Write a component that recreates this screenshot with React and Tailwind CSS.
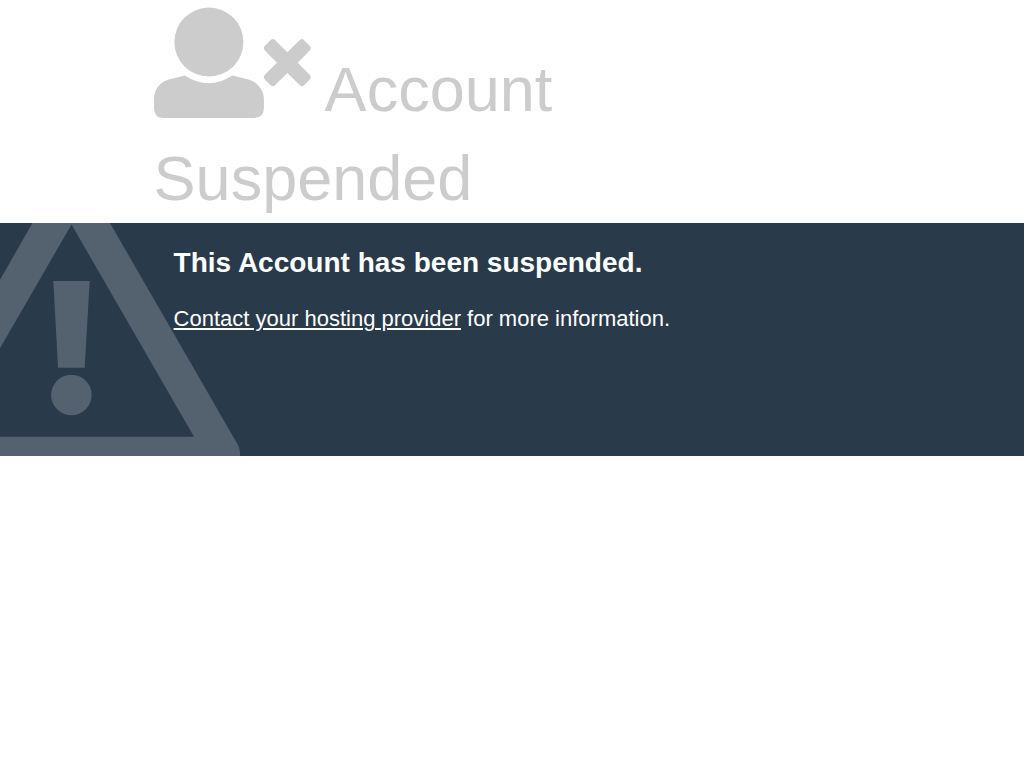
import React from 'react';

function UserTimesIcon() {
  return (
    <svg viewBox="0.6 0 158 118" className="inline-block w-[158px] h-[118px] -mr-px align-[-7px]" fill="currentColor" aria-hidden="true">
      <circle cx="55.5" cy="42" r="34.5" />
      <path d="M31.5 75.5 Q55 91 79 75.5 L95 79.500 C104 82 110.500 90 110.500 99 V108 Q110.500 118 100.500 118 H10.600 Q0.600 118 0.600 108 V99 C0.600 90 6 82 15.500 79.500 Z" />
      <path d="M111 50 Q109.500 48 111 46.300 L117.500 39.800 Q119.500 38.200 121.300 39.800 L134 52.200 L146.700 39.800 Q148.500 38.200 150.300 39.800 L156.800 46.300 Q158.200 48 156.800 50 L144.300 62.700 L156.800 75.200 Q158.200 77 156.800 79 L150.300 85.500 Q148.500 87 146.700 85.500 L134 73 L121.300 85.500 Q119.500 87 117.500 85.500 L111 79 Q109.500 77 111 75.200 L123.500 62.700 Z" />
    </svg>
  );
}

function WarningTriangle() {
  return (
    <svg viewBox="0 0 240 233" className="absolute top-0 left-0 w-60 h-[233px] text-[#54616e]" fill="currentColor" aria-hidden="true">
      <path
        fillRule="evenodd"
        d="M32.500 0 H110 L238 222 Q240 226 240 230 V233 H-97 V226 Z M71.500 1.500 L-51 213.700 H194 Z"
      />
      <path d="M53.300 58 H89.700 L84.700 144.700 H58 Z" />
      <circle cx="71.400" cy="172" r="20.300" />
    </svg>
  );
}

export default function App() {
  return (
    <main className="min-h-screen bg-white font-['Liberation_Sans',Arial,sans-serif]">
      <header className="mx-auto w-7/10 text-[#cccccc]">
        <h1 className="text-[63px] leading-[89px]">
          <UserTimesIcon /> Account Suspended
        </h1>
      </header>

      <section className="relative overflow-hidden bg-[#293a4a] text-white">
        <WarningTriangle />
        <div className="relative mx-auto w-7/10 px-5 pt-5 pb-[121px]">
          <h2 className="text-[28px] leading-10 font-bold">This Account has been suspended.</h2>
          <p className="mt-5 text-[22px] leading-8">
            <a href="#contact" className="underline">Contact your hosting provider</a> for more information.
          </p>
        </div>
      </section>
    </main>
  );
}
